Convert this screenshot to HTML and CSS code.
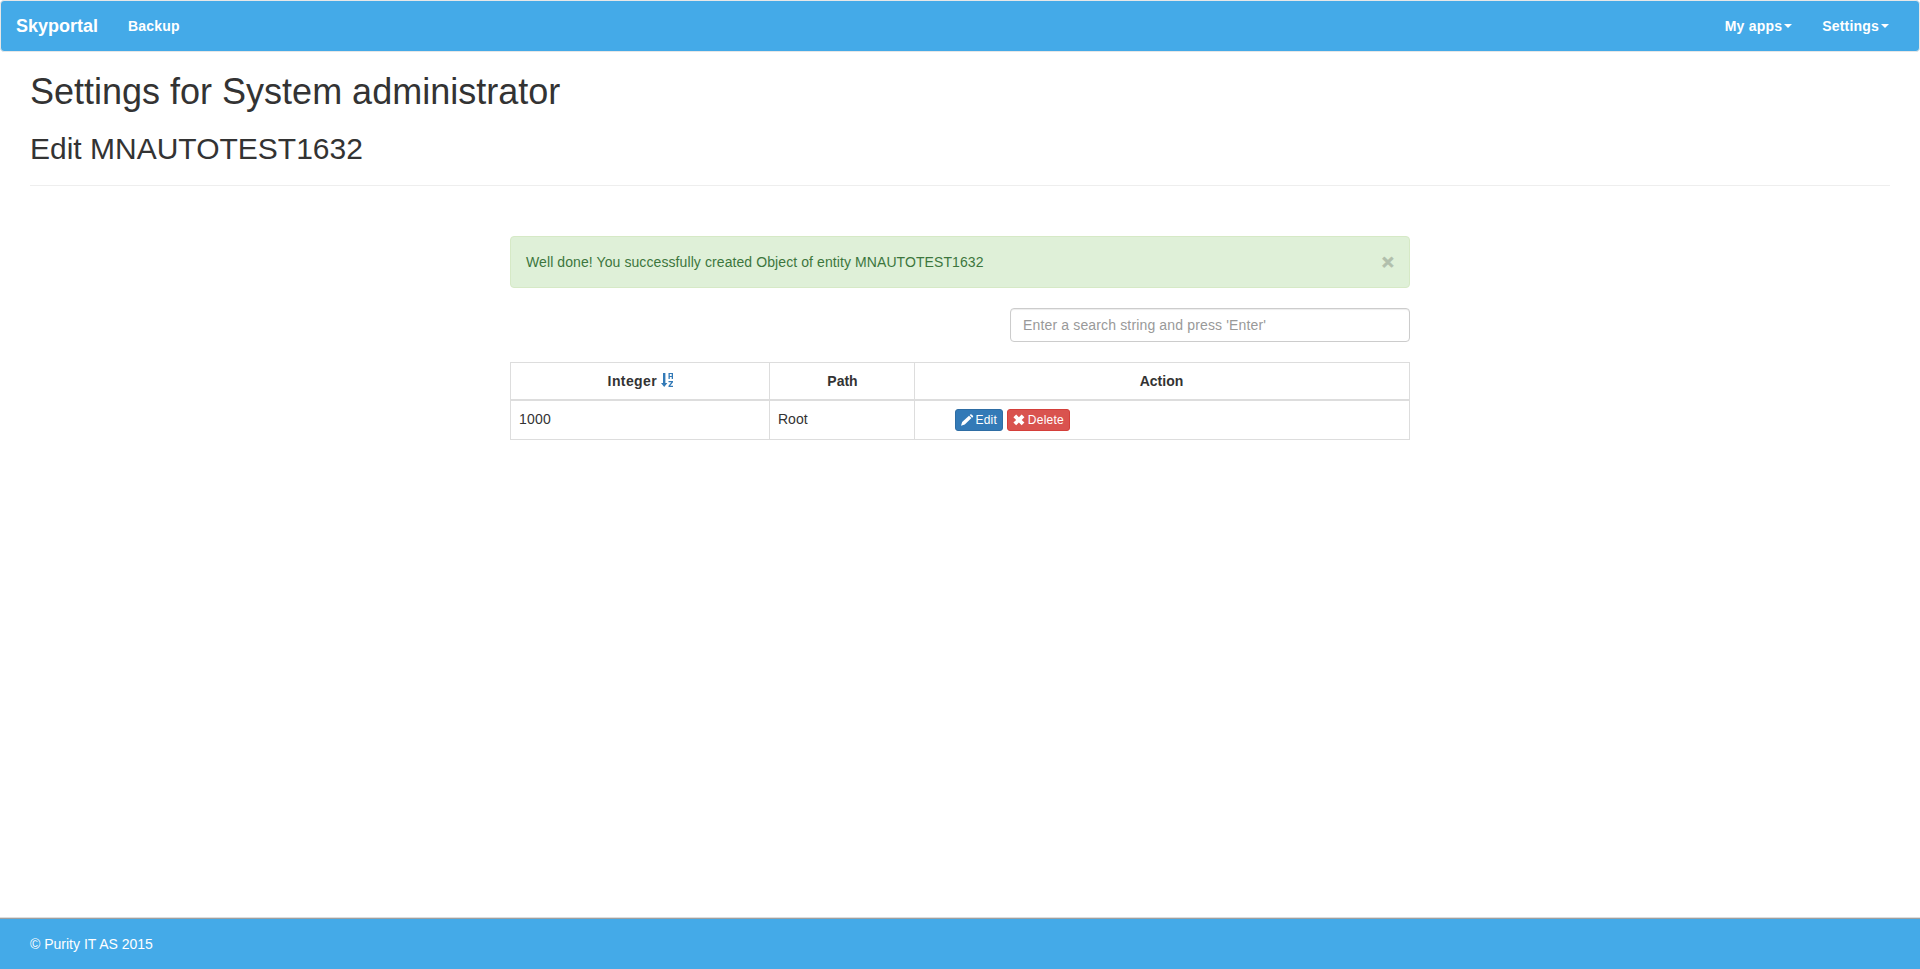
FILE: index.html
```
<!DOCTYPE html>
<html lang="en">
<head>
<meta charset="utf-8">
<title>Skyportal</title>
<link rel="stylesheet" href="styles.css">
</head>
<body>
<nav class="navbar">
  <a class="brand">Skyportal</a>
  <a class="nav-link">Backup</a>
  <div class="nav-right">
    <a class="nav-link">My apps<span class="caret"></span></a>
    <a class="nav-link">Settings<span class="caret"></span></a>
  </div>
</nav>
<main class="content">
  <h1>Settings for System administrator</h1>
  <h2>Edit MNAUTOTEST1632</h2>
  <hr>
  <section class="panel">
    <div class="alert">
      <span>Well done! You successfully created Object of entity MNAUTOTEST1632</span>
      <button class="close" type="button">×</button>
    </div>
    <input class="search" type="text" placeholder="Enter a search string and press 'Enter'">
    <table class="table">
      <colgroup><col class="col-integer"><col class="col-path"><col class="col-action"></colgroup>
      <thead>
        <tr>
          <th class="th-integer">Integer <svg class="sort-icon" width="12" height="14" viewBox="0 0 12 14" fill="#337ab7"><path d="M2 0h2.400v10H6.400L3.200 14 0 10h2zM7.500 0H12v6h-1.300V4.100H8.800V6H7.500zM8.800 1.100v1.900h1.900V1.100zM7.500 8H12v1.300L9.200 12.800H12V14H7.500v-1.300l2.800-3.500H7.500z"/></svg></th>
          <th>Path</th>
          <th class="th-action">Action</th>
        </tr>
      </thead>
      <tbody>
        <tr>
          <td>1000</td>
          <td class="path">Root</td>
          <td class="actions"><div class="buttons">
            <a class="btn btn-edit"><svg width="13" height="12" viewBox="0 0 13 12" fill="#fff"><path d="M0 12l1.200-3.800L8.300 1.500l2.600 2.500L3.900 10.800zM9 .9l.7-.6q.6-.5 1.200 0l1.500 1.400q.6.600 0 1.200l-.8.700z"/></svg>Edit</a>
            <a class="btn btn-delete"><svg width="12" height="12" viewBox="0 0 12 12" fill="#fff"><path d="M3.200.5L6 3.200 8.800.5 11.600 3.200 8.800 5.900l2.800 2.700L8.800 11.300 6 8.600l-2.800 2.700L.4 8.600l2.800-2.700L.4 3.200z"/></svg>Delete</a>
          </div></td>
        </tr>
      </tbody>
    </table>
  </section>
</main>
<footer class="footer">© Purity IT AS 2015</footer>
</body>
</html>
```
FILE: styles.css
```
* { box-sizing: border-box; }
body {
  margin: 0;
  min-height: 969px;
  display: flex;
  flex-direction: column;
  font: 14px/20px "Liberation Sans", Arial, sans-serif;
  color: #333;
  background: #fff;
}
.navbar {
  display: flex;
  height: 52px;
  padding: 0 15px 0 0;
  border: 1px solid #e7e7e7;
  border-radius: 4px;
  background: #44aae8;
  color: #fff;
  font-weight: bold;
}
.brand { padding: 15px; font-size: 18px; }
.nav-link {
  display: flex;
  align-items: center;
  padding: 15px;
  letter-spacing: .2px;
}
.nav-right { display: flex; margin-left: auto; }
.caret {
  margin-left: 2px;
  border: 4px solid transparent;
  border-top-color: #fff;
  border-bottom: 0;
}
.content { flex: 1; padding: 20px 30px 0; }
h1, h2 { margin: 0 0 20px; font-weight: 500; line-height: 1.1; }
h1 { font-size: 36px; }
h2 { font-size: 30px; }
hr { margin: 0; border: 0; border-top: 1px solid #eee; }
.panel {
  display: flex;
  flex-direction: column;
  width: 900px;
  margin: 50px auto 0;
}
.alert {
  display: flex;
  justify-content: space-between;
  height: 52px;
  padding: 15px;
  border: 1px solid #d6e9c6;
  border-radius: 4px;
  background: #dff0d8;
  color: #3c763d;
  letter-spacing: .09px;
}
.close {
  height: 20px;
  padding: 0;
  border: 0;
  background: none;
  color: #000;
  font: bold 21px/19px "Liberation Sans", Arial, sans-serif;
  -webkit-text-stroke: .8px #000;
  opacity: .2;
}
.search {
  align-self: flex-end;
  width: 400px;
  height: 34px;
  margin: 20px 0;
  padding: 6px 12px;
  border: 1px solid #ccc;
  border-radius: 4px;
  box-shadow: inset 0 1px 1px rgba(0, 0, 0, .075);
  font: inherit;
  letter-spacing: .15px;
}
.search::placeholder { color: #999; }
.table {
  width: 900px;
  table-layout: fixed;
  border-collapse: separate;
  border-spacing: 0;
  border: solid #ddd;
  border-width: 1px 0 0 1px;
}
.col-integer { width: 259px; }
.col-path { width: 145px; }
th, td {
  padding: 8px 7px 8px 8px;
  border-right: 1px solid #ddd;
  border-bottom: 1px solid #ddd;
  vertical-align: top;
}
th { height: 38px; border-bottom-width: 2px; }
td { height: 39px; text-align: left; letter-spacing: .2px; }
.th-integer { letter-spacing: .4px; }
.th-action { padding: 8px 8px 8px 7px; }
.path { letter-spacing: 0; }
.sort-icon { vertical-align: -1px; }
.actions { padding-left: 40px; }
.buttons { display: flex; gap: 4px; }
.btn {
  display: flex;
  align-items: center;
  gap: 2px;
  height: 22px;
  padding: 0 5px;
  border: 1px solid;
  border-radius: 3px;
  color: #fff;
  font-size: 12px;
  line-height: 18px;
}
.btn-edit { width: 48px; background: #337ab7; border-color: #2e6da4; }
.btn-delete {
  width: 63px;
  gap: 3px;
  background: #d9534f;
  border-color: #d43f3a;
  letter-spacing: .25px;
}
.footer {
  height: 52px;
  padding: 16px 30px 15px;
  border-top: 1px solid #ddd;
  box-shadow: inset 0 1px #9c9fa1;
  background: #44aae8;
  color: #fff;
}
```
